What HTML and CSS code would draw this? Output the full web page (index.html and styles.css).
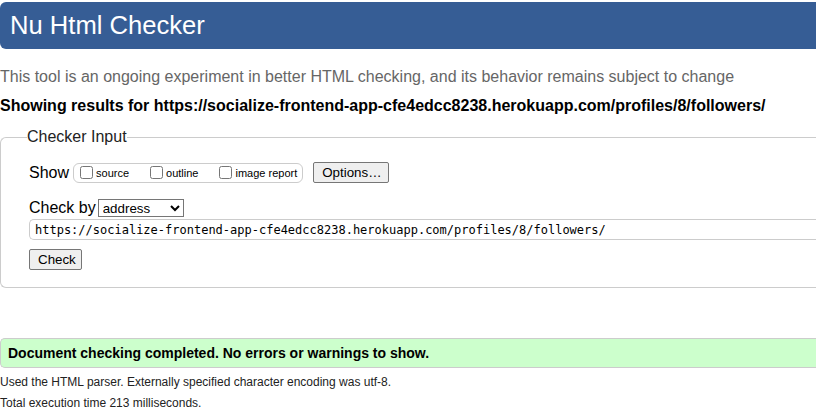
FILE: index.html
```html
<!DOCTYPE html>
<html lang="en">
<head>
<meta charset="utf-8">
<title>Nu Html Checker</title>
<link rel="stylesheet" href="styles.css">
</head>
<body>
<header class="masthead"><h1 class="title">Nu Html Checker</h1></header>
<p class="intro">This tool is an ongoing experiment in better HTML checking, and its behavior remains subject to change</p>
<p class="showing">Showing results for https://socialize-frontend-app-cfe4edcc8238.herokuapp.com/profiles/8/followers/</p>
<form class="form">
<fieldset class="checker">
<legend class="legend">Checker Input</legend>
<div class="row show-row">
<span class="label">Show</span>
<span class="opts">
<label class="opt"><input type="checkbox" class="cb">source</label>
<label class="opt"><input type="checkbox" class="cb">outline</label>
<label class="opt"><input type="checkbox" class="cb">image report</label>
</span>
<button type="button" class="btn options">Options…</button>
</div>
<div class="row by-row">
<span class="label">Check by</span>
<select class="sel"><option>address</option></select>
</div>
<div class="row url-row">
<input class="url" type="text" value="https://socialize-frontend-app-cfe4edcc8238.herokuapp.com/profiles/8/followers/">
</div>
<div class="row">
<button type="button" class="btn check">Check</button>
</div>
</fieldset>
</form>
<p class="success">Document checking completed. No errors or warnings to show.</p>
<p class="meta">Used the HTML parser. Externally specified character encoding was utf-8.</p>
<p class="meta">Total execution time 213 milliseconds.</p>
</body>
</html>
```
FILE: styles.css
```css
html, body {
  margin: 0;
  padding: 0;
  background: #fff;
  overflow: hidden;
}
body {
  font-family: "Liberation Sans", Arial, sans-serif;
  font-size: 16px;
  color: #000;
}
.masthead {
  margin-top: 2px;
  height: 47px;
  background: #365d95;
  border-radius: 6px 0 0 6px;
  display: flex;
  align-items: center;
  padding-left: 10px;
}
.title {
  margin: 0;
  color: #fff;
  font-weight: normal;
  font-size: 25.6px;
  line-height: 1;
}
.intro {
  margin: 18px 0 0;
  color: #666;
  font-size: 16px;
  line-height: 20px;
}
.showing {
  margin: 9px 0 0;
  font-weight: bold;
  font-size: 16px;
  line-height: 20px;
}
.form {
  margin-top: 12px;
}
.checker {
  margin: 0;
  border: 1px solid #ccc;
  border-right: none;
  border-radius: 6px 0 0 6px;
  padding: 8px 0 17px 28px;
}
.legend {
  margin-left: -2px;
  padding: 0;
  font-size: 16px;
  color: #222;
}
.row {
  display: flex;
  align-items: center;
}
.label {
  font-size: 16px;
}
.show-row {
  margin-top: 8px;
}
.opts {
  display: flex;
  align-items: center;
  margin-left: 4px;
  height: 18px;
  border: 1px solid #ccc;
  border-radius: 6px;
  padding: 0 5px 0 6px;
  font-size: 11px;
}
.opt {
  display: flex;
  align-items: center;
  margin-right: 21px;
}
.opt:last-child {
  margin-right: 0;
}
.cb {
  margin: 0 3px 0 0;
  width: 13px;
  height: 13px;
}
.btn {
  font-family: "Liberation Sans", Arial, sans-serif;
  font-size: 13.33px;
  background: #efefef;
  border: 1px solid #767676;
  border-radius: 2px;
  padding: 1px 8px;
  color: #000;
}
.options {
  margin-left: 10px;
  width: 76px;
  height: 21px;
}
.by-row {
  margin-top: 16px;
}
.sel {
  margin-left: 2px;
  width: 86px;
  height: 18px;
  font-family: "Liberation Sans", Arial, sans-serif;
  font-size: 13.33px;
  border: 1px solid #767676;
  border-radius: 0;
  background: #fff;
}
.url-row {
  margin-top: 2px;
}
.url {
  flex: 1;
  height: 21px;
  box-sizing: border-box;
  border: 1px solid #ccc;
  border-right: none;
  border-radius: 5px 0 0 5px;
  padding: 0 5px;
  font-family: "DejaVu Sans Mono", monospace;
  font-size: 12px;
  color: #000;
}
.check {
  margin-top: 9px;
  width: 53px;
  height: 21px;
}
.success {
  margin: 50px 0 0;
  height: 30px;
  box-sizing: border-box;
  background: #ccffcc;
  border: 1px solid #ccc;
  border-right: none;
  border-radius: 5px 0 0 5px;
  padding-left: 7px;
  display: flex;
  align-items: center;
  font-weight: bold;
  font-size: 14px;
}
.meta {
  margin: 7px 0 0;
  font-size: 12px;
  line-height: 15px;
  color: #222;
}
.meta + .meta {
  margin-top: 6px;
}
```
